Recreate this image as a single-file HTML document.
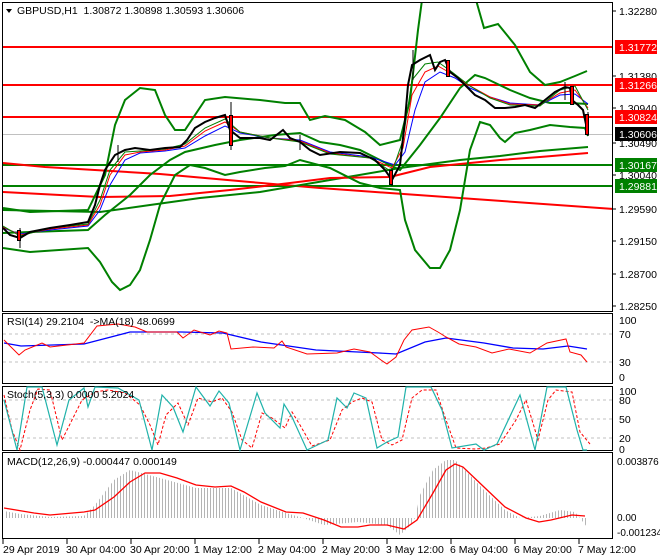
<!DOCTYPE html>
<html><head><meta charset="utf-8"><style>
html,body{margin:0;padding:0;background:#fff;}
svg{display:block;font-family:"Liberation Sans",sans-serif;font-size:10.5px;}
</style></head><body>
<svg width="660" height="560" viewBox="0 0 660 560" xmlns="http://www.w3.org/2000/svg">
<defs>
<pattern id="hp" width="3" height="10" patternUnits="userSpaceOnUse"><rect x="0" y="0" width="1" height="10" fill="#b4b4b4"/></pattern>
<clipPath id="mc"><rect x="3" y="3" width="609" height="308"/></clipPath>
</defs>
<rect width="660" height="560" fill="#fff"/>
<g fill="none" stroke="#000" stroke-width="1">
<rect x="2.5" y="2.5" width="610" height="309"/>
<rect x="2.5" y="313.5" width="610" height="70"/>
<rect x="2.5" y="386.5" width="610" height="64"/>
<rect x="2.5" y="452.5" width="610" height="86"/>
</g>
<g clip-path="url(#mc)">
<line x1="3" y1="134.5" x2="612" y2="134.5" stroke="#c0c0c0"/>
<g stroke="#ff0000" stroke-width="2"><line x1="3" y1="47" x2="612" y2="47"/><line x1="3" y1="85" x2="612" y2="85"/><line x1="3" y1="117" x2="612" y2="117"/></g>
<g stroke="#008000" stroke-width="2"><line x1="3" y1="165" x2="612" y2="165"/><line x1="3" y1="186" x2="612" y2="186"/></g>
<polyline fill="none" stroke="#ff0000" stroke-width="2" points="3,163 45,167 160,174 250,182 320,188 613,209"/>
<polyline fill="none" stroke="#008000" stroke-width="2" points="3,210 100,212 150,205 200,198 260,192 330,180 400,168 460,160 500,156 540,151 588,147"/>
<polyline fill="none" stroke="#ff0000" stroke-width="2" points="3,192 60,195 100,197 170,196 230,190 290,183 330,178 390,177 430,167 500,160 540,157 588,153"/>
<g fill="none" stroke="#008000" stroke-width="2">
<polyline points="3,208 30,212 88,210 105,175 115,125 125,100 140,88 155,90 165,115 175,130 185,130 205,100 225,97 260,100 285,103 300,103 310,120 325,116 345,120 365,132 380,145 400,140 410,100 418,30 422,0 476,0 484,28 498,24 515,45 530,72 545,85 560,82 575,76 587,71"/>
<polyline points="3,248 30,252 88,248 100,262 112,282 120,290 130,285 140,270 150,240 160,205 175,175 190,165 205,168 225,175 240,172 265,168 285,166 300,160 330,168 360,183 380,188 400,190 405,220 415,250 430,268 440,268 450,250 460,210 470,150 480,122 490,125 500,138 505,142 515,133 530,130 550,125 570,127 585,128 588,136"/>
<polyline points="3,233 30,232 88,230 105,215 130,195 150,175 170,160 185,152 215,145 240,140 275,135 300,133 320,142 340,145 360,150 380,160 400,170 420,145 440,118 460,88 475,75 485,78 510,90 530,98 550,103 570,103 588,104"/>
</g>
<polyline fill="none" stroke="#0000ff" stroke-width="1" points="3,228 20,234 50,230 88,226 100,210 110,185 125,160 140,153 165,151 185,148 205,136 225,126 240,133 270,138 300,140 330,152 370,157 395,165 405,152 415,110 425,82 440,72 455,78 470,88 490,97 510,103 540,105 560,95 575,94 588,104"/>
<polyline fill="none" stroke="#ff0000" stroke-width="1" points="3,227 20,235 50,229 88,225 100,205 110,175 125,155 140,152 165,150 185,146 205,131 225,122 240,132 270,138 300,141 330,153 370,158 392,168 403,148 412,95 425,72 438,66 452,74 470,86 490,97 510,104 540,105 560,93 575,90 588,108"/>
<polyline fill="none" stroke="#008000" stroke-width="1" points="3,226 20,236 50,228 88,224 100,200 110,170 125,152 140,151 165,149 185,144 205,128 225,119 240,132 270,138 300,142 330,154 370,158 392,172 403,140 412,80 425,64 438,62 452,72 470,86 490,98 510,105 540,106 560,90 575,86 588,110"/>
<polyline fill="none" stroke="#000" stroke-width="2" points="3,228 10,235 20,238 30,232 50,228 70,225 88,222 95,205 100,185 105,170 115,155 125,150 135,148 150,150 165,148 180,147 187,140 195,128 205,122 215,118 225,115 230,130 240,138 250,138 260,138 270,140 283,130 290,138 300,142 310,150 320,155 340,152 360,153 375,160 385,170 392,180 400,165 405,120 408,85 412,65 420,60 430,55 435,70 440,62 445,60 450,72 458,78 465,85 475,95 485,100 495,108 505,108 515,107 525,105 535,108 545,100 555,92 565,87 570,88 572,100 578,105 583,110 588,134"/>
<g stroke="#000" stroke-width="1">
<line x1="20" y1="228" x2="20" y2="248"/><line x1="118" y1="145" x2="118" y2="162"/><line x1="231" y1="102" x2="231" y2="150"/><line x1="300" y1="135" x2="300" y2="150"/><line x1="392" y1="168" x2="392" y2="186"/><line x1="413" y1="50" x2="413" y2="80"/><line x1="565" y1="82" x2="565" y2="100"/><line x1="588" y1="112" x2="588" y2="136"/>
</g>
<g fill="#ff0000" stroke="#000" stroke-width="1">
<rect x="229.5" y="115.5" width="3" height="30"/><rect x="389.5" y="170.5" width="3" height="14"/><rect x="446.5" y="60.5" width="3" height="16"/><rect x="570.5" y="86.5" width="3" height="18"/><rect x="585.5" y="114.5" width="3" height="20"/><rect x="17.5" y="230.5" width="3" height="10"/>
</g>
</g>
<polygon points="6,9 12,9 9,13" fill="#000"/>
<text x="17" y="14" fill="#000">GBPUSD,H1&#160; 1.30872 1.30898 1.30593 1.30606</text>
<g fill="#000">
<text x="619" y="15">1.32280</text><text x="619" y="80">1.31380</text><text x="619" y="112">1.30940</text><text x="619" y="147">1.30490</text><text x="619" y="179">1.30040</text><text x="619" y="213">1.29590</text><text x="619" y="245">1.29150</text><text x="619" y="278">1.28700</text><text x="619" y="310">1.28250</text>
</g>
<g stroke="#000"><line x1="612" y1="11" x2="616" y2="11"/><line x1="612" y1="76" x2="616" y2="76"/><line x1="612" y1="108" x2="616" y2="108"/><line x1="612" y1="143" x2="616" y2="143"/><line x1="612" y1="175" x2="616" y2="175"/><line x1="612" y1="209" x2="616" y2="209"/><line x1="612" y1="241" x2="616" y2="241"/><line x1="612" y1="274" x2="616" y2="274"/><line x1="612" y1="306" x2="616" y2="306"/></g>
<rect x="615" y="40" width="42" height="14" fill="#ff0000"/><text x="619" y="51" fill="#fff">1.31772</text>
<rect x="615" y="78" width="42" height="14" fill="#ff0000"/><text x="619" y="89" fill="#fff">1.31266</text>
<rect x="615" y="110" width="42" height="14" fill="#ff0000"/><text x="619" y="121" fill="#fff">1.30824</text>
<rect x="615" y="127" width="42" height="14" fill="#000"/><text x="619" y="138" fill="#fff">1.30606</text>
<rect x="615" y="158" width="42" height="14" fill="#008000"/><text x="619" y="169" fill="#fff">1.30167</text>
<rect x="615" y="179" width="42" height="14" fill="#008000"/><text x="619" y="190" fill="#fff">1.29881</text>
<g stroke="#c0c0c0" stroke-dasharray="3,3"><line x1="3" y1="334" x2="612" y2="334"/><line x1="3" y1="362" x2="612" y2="362"/></g>
<polyline fill="none" stroke="#0000ff" stroke-width="1.3" points="4,343 21,346 84,344 130,332 181,332 223,333 261,342 316,350 379,353 396,354 425,342 446,338 484,343 513,348 543,349 568,346 587,349"/>
<polyline fill="none" stroke="#ff0000" stroke-width="1" points="4,340 19,355 25,350 42,343 50,347 84,343 97,326 118,324 135,327 147,332 177,332 183,338 194,330 210,335 219,331 227,333 231,349 253,347 274,348 282,341 286,347 307,354 337,353 354,349 370,352 381,360 387,364 396,357 404,340 412,330 429,327 438,332 446,337 459,344 476,347 492,353 509,349 530,353 547,343 566,339 570,352 581,355 587,362"/>
<text x="7" y="325" fill="#000">RSI(14) 29.2104&#160; -&gt;MA(18) 48.0699</text>
<g fill="#000"><text x="619" y="324">100</text><text x="619" y="338">70</text><text x="619" y="366">30</text><text x="619" y="381">0</text></g>
<g stroke="#c0c0c0" stroke-dasharray="3,3"><line x1="3" y1="400" x2="612" y2="400"/><line x1="3" y1="419" x2="612" y2="419"/><line x1="3" y1="438" x2="612" y2="438"/></g>
<polyline fill="none" stroke="#ff0000" stroke-dasharray="3,2" stroke-width="1" points="4,395 12,430 20,450 30,410 38,389 50,390 62,440 72,420 82,400 95,392 108,390 125,393 140,405 150,425 158,445 166,415 178,403 188,425 198,398 212,402 222,398 232,412 242,440 252,448 262,413 272,418 285,428 292,412 300,425 312,446 330,440 342,410 352,402 362,398 372,402 382,440 392,445 402,440 412,398 422,390 436,390 446,420 456,448 476,449 486,448 500,444 516,420 526,400 538,440 548,400 556,390 572,392 580,432 590,444"/>
<polyline fill="none" stroke="#20b2aa" stroke-width="1.2" points="4,400 17,450 27,387 42,387 57,445 69,400 84,388 88,407 95,387 118,388 139,400 152,450 162,395 173,407 183,432 196,387 210,406 219,391 229,403 240,450 257,393 265,413 280,428 284,404 292,417 307,450 328,440 337,398 347,408 354,393 366,398 377,448 387,442 398,437 406,387 431,387 442,410 452,448 476,444 484,450 497,444 520,395 535,450 547,387 566,387 577,430 583,450 587,450"/>
<text x="7" y="398" fill="#000">Stoch(5,3,3) 0.0000 5.2024</text>
<g fill="#000"><text x="619" y="395">100</text><text x="619" y="404">80</text><text x="619" y="423">50</text><text x="619" y="442">20</text><text x="619" y="453">0</text></g>
<polygon fill="url(#hp)" points="4,511 20,514 50,517 84,516 95,505 114,480 130,470 145,474 160,478 196,488 231,488 261,505 286,513 303,518 324,525 358,522 387,525 400,535 410,526 415,518 420,495 433,470 446,460 455,460 463,468 484,490 505,510 520,518 540,516 560,510 575,512 587,527 587,518 4,518"/>
<polyline fill="none" stroke="#ff0000" stroke-width="1.3" points="4,508 34,513 50,515 84,512 95,510 114,497 130,482 145,473 160,473 177,478 196,485 215,487 231,486 244,492 261,502 286,512 303,513 324,520 341,527 358,527 370,525 387,525 404,529 417,520 433,493 446,470 455,464 463,467 484,487 505,507 526,518 539,522 551,520 572,515 585,516"/>
<text x="7" y="465" fill="#000">MACD(12,26,9) -0.000447 0.000149</text>
<g fill="#000" style="font-size:10px"><text x="617" y="465">0.003876</text><text x="617" y="521">0.00</text><text x="617" y="536">-0.001234</text></g>
<g stroke="#000"><line x1="3" y1="539" x2="3" y2="544"/><line x1="67" y1="539" x2="67" y2="544"/><line x1="131" y1="539" x2="131" y2="544"/><line x1="195" y1="539" x2="195" y2="544"/><line x1="259" y1="539" x2="259" y2="544"/><line x1="323" y1="539" x2="323" y2="544"/><line x1="387" y1="539" x2="387" y2="544"/><line x1="451" y1="539" x2="451" y2="544"/><line x1="515" y1="539" x2="515" y2="544"/><line x1="579" y1="539" x2="579" y2="544"/></g>
<g fill="#000"><text x="3" y="553">29 Apr 2019</text><text x="66" y="553">30 Apr 04:00</text><text x="130" y="553">30 Apr 20:00</text><text x="194" y="553">1 May 12:00</text><text x="258" y="553">2 May 04:00</text><text x="322" y="553">2 May 20:00</text><text x="386" y="553">3 May 12:00</text><text x="450" y="553">6 May 04:00</text><text x="514" y="553">6 May 20:00</text><text x="578" y="553">7 May 12:00</text></g>
</svg>
</body></html>
